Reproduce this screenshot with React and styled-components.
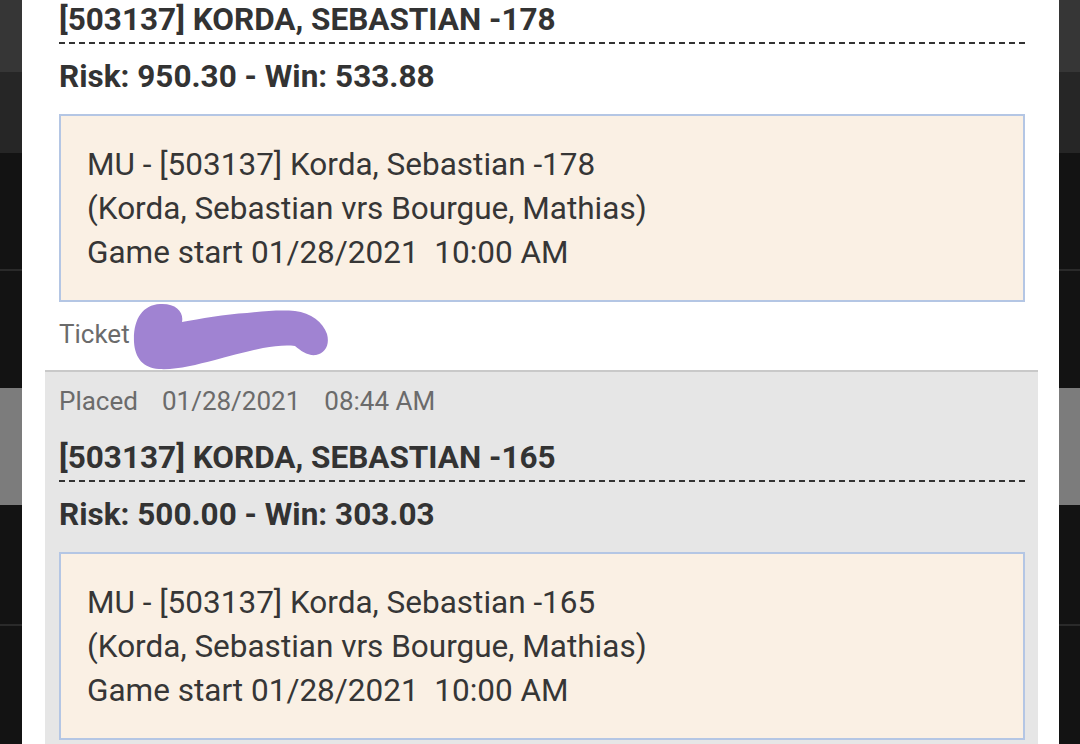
import React from "react";
import styled, { createGlobalStyle } from "styled-components";

const GlobalStyle = createGlobalStyle`
  html, body { margin: 0; padding: 0; background: #131313; }
  body { font-family: Roboto, "Noto Sans", "Liberation Sans", sans-serif; }
  * { box-sizing: border-box; }
`;

const Screen = styled.div`
  position: relative;
  width: 1080px;
  height: 744px;
  overflow: hidden;
  background: #131313;
`;

const Backdrop = styled.div`
  display: flex;
  flex-direction: column;
  height: 100%;
`;

const Band = styled.div`
  flex: 0 0 ${(p) => p.$h}px;
  background: ${(p) => p.$c};
`;

const Modal = styled.div`
  position: absolute;
  top: 0;
  bottom: 0;
  left: 22px;
  width: 1037px;
  background: #ffffff;
  overflow: hidden;
`;

const List = styled.div`
  display: flex;
  flex-direction: column;
  margin-top: -68px;
  padding: 0 21px 0 23px;
`;

const Item = styled.section`
  display: flex;
  flex-direction: column;
  background: ${(p) => (p.$alt ? "#e6e6e6" : "#ffffff")};
  border-top: 2px solid ${(p) => (p.$alt ? "#c9c9c9" : "#e3e3e3")};
  padding: 12px 13px 19px 14px;
`;

const MetaRow = styled.div`
  position: relative;
  display: flex;
  gap: 24px;
  font-size: 26px;
  line-height: 34px;
  color: #6b6b6b;
`;

const Headline = styled.div`
  margin-top: 22px;
  font-size: 31.5px;
  font-weight: 700;
  line-height: 36px;
  color: #333333;
  padding-bottom: 4px;
  height: 42px;
  background-image: linear-gradient(to right, #333333 0 6px, transparent 6px 10px);
  background-size: 10px 2px;
  background-repeat: repeat-x;
  background-position: left bottom;
`;

const Amounts = styled.div`
  margin-top: 15px;
  font-size: 31.5px;
  font-weight: 700;
  line-height: 36px;
  color: #333333;
`;

const Detail = styled.div`
  margin-top: 19px;
  background: #faf0e4;
  border: 2px solid #b4c6e4;
  padding: 27px 24px 25px 26px;
  font-size: 31.5px;
  line-height: 44px;
  color: #363636;
  white-space: pre-wrap;
`;

const TicketRow = styled(MetaRow)`
  margin-top: 15px;
`;

const Scribble = styled.svg`
  position: absolute;
  left: 71px;
  top: -17px;
  width: 210px;
  height: 75px;
`;

const bets = [
  {
    placed: ["01/28/2021", "08:44 AM"],
    line: "-178",
    risk: "950.30",
    win: "533.88",
    redacted: true,
  },
  {
    placed: ["01/28/2021", "08:44 AM"],
    line: "-165",
    risk: "500.00",
    win: "303.03",
    redacted: false,
  },
];

const bands = [
  [72, "#363636"],
  [81, "#262626"],
  [116, "#131313"],
  [2, "#2a2a2a"],
  [117, "#131313"],
  [117, "#7c7c7c"],
  [119, "#131313"],
  [2, "#2a2a2a"],
  [118, "#131313"],
];

const scribblePath =
  "M 4 42 C 3 20, 12 5, 30 4 C 46 3, 54 12, 52 22 C 70 19, 95 14, 117 13 C 135 11, 150 10, 165 11 C 181 13, 193 22, 197 34 C 200 45, 195 53, 186 55 C 178 56, 171 51, 165 46 C 155 45, 145 46, 133 48 C 118 51, 100 56, 85 60 C 65 65, 47 70, 29 69 C 13 68, 5 58, 4 42 Z";

export default function App() {
  return (
    <>
      <GlobalStyle />
      <Screen>
        <Backdrop>
          {bands.map(([h, c], i) => (
            <Band key={i} $h={h} $c={c} />
          ))}
        </Backdrop>
        <Modal>
          <List>
            {bets.map((b, i) => (
              <Item key={i} $alt={i % 2 === 1}>
                <MetaRow>
                  <span>Placed</span>
                  <span>{b.placed[0]}</span>
                  <span>{b.placed[1]}</span>
                </MetaRow>
                <Headline>[503137] KORDA, SEBASTIAN {b.line}</Headline>
                <Amounts>
                  Risk: {b.risk} - Win: {b.win}
                </Amounts>
                <Detail>
                  {`MU - [503137] Korda, Sebastian ${b.line}\n(Korda, Sebastian vrs Bourgue, Mathias)\nGame start 01/28/2021  10:00 AM`}
                </Detail>
                <TicketRow>
                  <span>Ticket</span>
                  {b.redacted && (
                    <Scribble viewBox="0 0 210 75">
                      <path d={scribblePath} fill="#a083d2" />
                    </Scribble>
                  )}
                </TicketRow>
              </Item>
            ))}
          </List>
        </Modal>
      </Screen>
    </>
  );
}
